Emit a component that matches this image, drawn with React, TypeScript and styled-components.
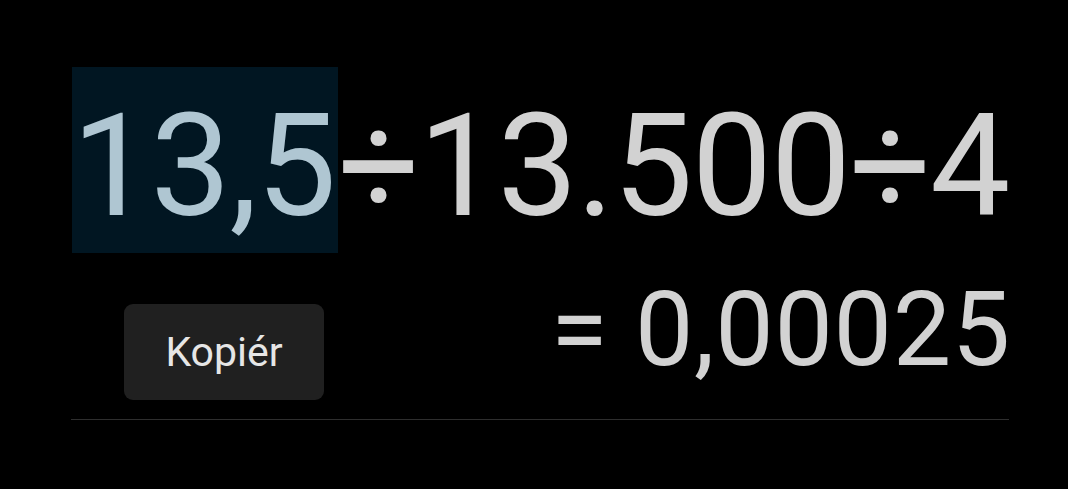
import React from 'react';
import styled, { createGlobalStyle } from 'styled-components';

const GlobalStyle = createGlobalStyle`
  html, body {
    margin: 0;
    padding: 0;
    background: #000;
  }
  body {
    font-family: Roboto, "Noto Sans", sans-serif;
  }
`;

const Screen = styled.div`
  width: 1068px;
  height: 489px;
  background: #000;
  box-sizing: border-box;
  padding: 67px 59px 0 71px;
  display: flex;
  flex-direction: column;
`;

const Expression = styled.div`
  display: flex;
  justify-content: flex-end;
  align-items: stretch;
  height: 186px;
  font-size: 143px;
  font-weight: 400;
  color: #d2d2d2;
  white-space: nowrap;
  letter-spacing: -1.4px;
`;

const Run = styled.span<{ $selected?: boolean }>`
  display: flex;
  align-items: center;
  box-sizing: border-box;
  padding-top: 12px;
  padding-right: ${(p) => (p.$selected ? '3px' : '0')};
  background: ${(p) => (p.$selected ? '#011622' : 'transparent')};
  color: ${(p) => (p.$selected ? '#afc6d2' : '#d2d2d2')};
`;

const ResultRow = styled.div`
  display: flex;
  align-items: flex-start;
  justify-content: space-between;
  margin-top: 25px;
`;

const CopyButton = styled.button`
  margin: 26px 0 0 53px;
  width: 200px;
  height: 96px;
  border: none;
  border-radius: 9px;
  background: #202020;
  color: #e6e6e6;
  font-family: Roboto, "Noto Sans", sans-serif;
  font-size: 41px;
  padding: 0;
`;

const Result = styled.div`
  font-size: 104px;
  color: #d2d2d2;
  letter-spacing: 0.7px;
  white-space: nowrap;
  line-height: 1;
  margin-right: -2px;
`;

const Divider = styled.div`
  margin-top: 19px;
  height: 1px;
  background: #2e2e2e;
`;

export default function App() {
  return (
    <>
      <GlobalStyle />
      <Screen>
        <Expression>
          <Run $selected>13,5</Run>
          <Run>÷13.500÷4</Run>
        </Expression>
        <ResultRow>
          <CopyButton>Kopiér</CopyButton>
          <Result>= 0,00025</Result>
        </ResultRow>
        <Divider />
      </Screen>
    </>
  );
}
